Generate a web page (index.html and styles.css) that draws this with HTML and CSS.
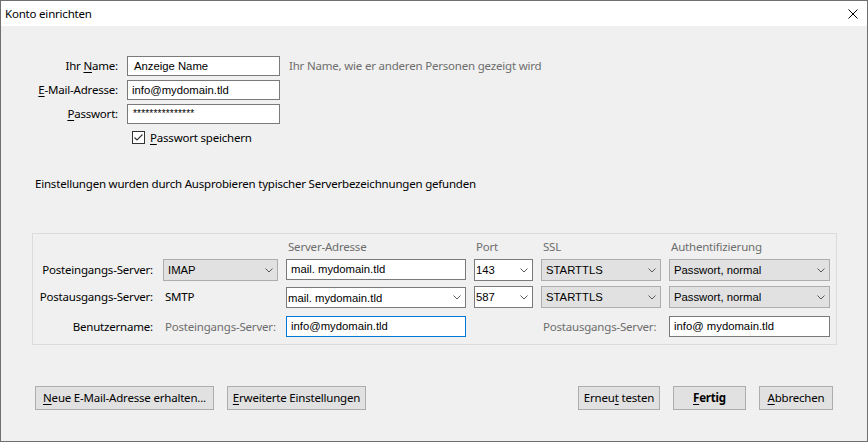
FILE: index.html
```html
<!DOCTYPE html>
<html lang="de">
<head>
<meta charset="utf-8">
<title>Konto einrichten</title>
<link rel="stylesheet" href="styles.css">
</head>
<body>
<div class="window">
  <div class="titlebar">
    <span class="title">Konto einrichten</span>
    <svg class="close" viewBox="0 0 10 10" width="10" height="10"><path d="M0.5 0.5 L9.5 9.5 M9.5 0.5 L0.5 9.5" stroke="#000" stroke-width="1" fill="none"/></svg>
  </div>
  <div class="content">
    <div class="identity">
      <span class="label">Ihr <u>N</u>ame:</span>
      <div class="field pad6">Anzeige Name</div>
      <span class="hint">Ihr Name, wie er anderen Personen gezeigt wird</span>

      <span class="label"><u>E</u>-Mail-Adresse:</span>
      <div class="field">info@mydomain.tld</div>
      <span></span>

      <span class="label"><u>P</u>asswort:</span>
      <div class="field pw">***************</div>
      <span></span>

      <span></span>
      <label class="check"><span class="box"><svg viewBox="0 0 11 11" width="11" height="11"><path d="M1.5 5.5 L4 8 L9.5 2.5" stroke="#333" stroke-width="1.1" fill="none"/></svg></span><span><u>P</u>asswort speichern</span></label>
      <span></span>
    </div>

    <p class="status">Einstellungen wurden durch Ausprobieren typischer Serverbezeichnungen gefunden</p>

    <div class="servers">
      <span></span><span></span>
      <span class="head">Server-Adresse</span>
      <span class="head">Port</span>
      <span class="head">SSL</span>
      <span class="head">Authentifizierung</span>

      <span class="rlabel">Posteingangs-Server:</span>
      <div class="select gray"><span>IMAP</span><svg class="chev" viewBox="0 0 8 5" width="8" height="5"><path d="M0.5 0.5 L4 4 L7.5 0.5" stroke="#5a5a5a" fill="none"/></svg></div>
      <div class="field f21">mail. mydomain.tld</div>
      <div class="select white"><span>143</span><svg class="chev" viewBox="0 0 8 5" width="8" height="5"><path d="M0.5 0.5 L4 4 L7.5 0.5" stroke="#5a5a5a" fill="none"/></svg></div>
      <div class="select gray"><span>STARTTLS</span><svg class="chev" viewBox="0 0 8 5" width="8" height="5"><path d="M0.5 0.5 L4 4 L7.5 0.5" stroke="#5a5a5a" fill="none"/></svg></div>
      <div class="select gray"><span>Passwort, normal</span><svg class="chev" viewBox="0 0 8 5" width="8" height="5"><path d="M0.5 0.5 L4 4 L7.5 0.5" stroke="#5a5a5a" fill="none"/></svg></div>

      <span class="rlabel">Postausgangs-Server:</span>
      <span class="plain">SMTP</span>
      <div class="select white combo"><span>mail. mydomain.tld</span><svg class="chev" viewBox="0 0 8 5" width="8" height="5"><path d="M0.5 0.5 L4 4 L7.5 0.5" stroke="#5a5a5a" fill="none"/></svg></div>
      <div class="select white"><span>587</span><svg class="chev" viewBox="0 0 8 5" width="8" height="5"><path d="M0.5 0.5 L4 4 L7.5 0.5" stroke="#5a5a5a" fill="none"/></svg></div>
      <div class="select gray"><span>STARTTLS</span><svg class="chev" viewBox="0 0 8 5" width="8" height="5"><path d="M0.5 0.5 L4 4 L7.5 0.5" stroke="#5a5a5a" fill="none"/></svg></div>
      <div class="select gray"><span>Passwort, normal</span><svg class="chev" viewBox="0 0 8 5" width="8" height="5"><path d="M0.5 0.5 L4 4 L7.5 0.5" stroke="#5a5a5a" fill="none"/></svg></div>

      <span class="rlabel">Benutzername:</span>
      <span class="plain muted">Posteingangs-Server:</span>
      <div class="field f21 focus">info@mydomain.tld</div>
      <span></span>
      <span class="plain muted">Postausgangs-Server:</span>
      <div class="field f21">info@ mydomain.tld</div>
    </div>

    <div class="actions">
      <div class="group">
        <button class="btn w179"><u>N</u>eue E-Mail-Adresse erhalten...</button>
        <button class="btn w139"><u>E</u>rweiterte Einstellungen</button>
      </div>
      <div class="group">
        <button class="btn w82">Erneu<u>t</u> testen</button>
        <button class="btn w73 bold"><u>F</u>ertig</button>
        <button class="btn w74"><u>A</u>bbrechen</button>
      </div>
    </div>
  </div>
</div>
</body>
</html>
```

FILE: styles.css
```css
* { box-sizing: border-box; margin: 0; padding: 0; }
html, body { width: 868px; height: 442px; overflow: hidden; }
body {
  font-family: "Noto Sans", "DejaVu Sans", sans-serif;
  font-size: 11.5px;
  letter-spacing: -0.2px;
  color: #000;
  background: #f0f0f0;
}
u { text-decoration: underline; text-underline-offset: 2px; }

.window {
  width: 868px;
  height: 442px;
  border: 1px solid #6f6f6f;
  display: flex;
  flex-direction: column;
  background: #f0f0f0;
}
.titlebar {
  height: 25px;
  flex: none;
  background: #fff;
  display: flex;
  align-items: center;
  justify-content: space-between;
  padding-left: 4px;
  padding-right: 9px;
}
.title { line-height: 16px; }
.close { display: block; }

.content { flex: 1; display: flex; flex-direction: column; }

.identity {
  display: grid;
  grid-template-columns: 117px 153px auto;
  grid-template-rows: 20px 20px 20px 19px;
  column-gap: 9px;
  row-gap: 4px;
  margin-top: 30px;
  align-items: center;
}
.label { text-align: right; line-height: 16px; white-space: nowrap; }
.hint { color: #6d6d6d; line-height: 16px; white-space: nowrap; }

.field {
  height: 20px;
  background: #fff;
  border: 1px solid #7a7a7a;
  font-family: "Liberation Sans", Arial, sans-serif;
  font-size: 11.3px;
  letter-spacing: 0;
  line-height: 18px;
  padding-left: 4px;
  white-space: nowrap;
  overflow: hidden;
}
.pad6 { padding-left: 6px; }
.pw { padding-left: 5px; font-size: 10px; letter-spacing: 0.2px; }
.f21 { height: 21px; line-height: 19px; }
.focus { border-color: #0078d7; }

.check { display: flex; align-items: center; gap: 5px; margin-left: 5px; line-height: 16px; white-space: nowrap; }
.box {
  width: 13px; height: 13px;
  border: 1px solid #333;
  background: #fff;
  display: flex; align-items: center; justify-content: center;
}
.box svg { display: block; }

.status { margin-top: 29px; margin-left: 34px; line-height: 16px; white-space: nowrap; }

.servers {
  margin-top: 41px;
  margin-left: 31px;
  width: 805px;
  border: 1px solid #dcdcdc;
  padding: 5px 5px 7px 0;
  display: grid;
  grid-template-columns: 122px 115px 180px 59px 120px 161px;
  grid-template-rows: 20px 27px 30px 21px;
  column-gap: 8px;
  align-items: start;
}
.head { color: #6d6d6d; padding-left: 2px; line-height: 16px; white-space: nowrap; }
.rlabel { text-align: right; padding-right: 2px; line-height: 22px; white-space: nowrap; }
.plain { padding-left: 2px; line-height: 22px; white-space: nowrap; }
.muted { color: #6d6d6d; line-height: 21px; }

.select {
  height: 22px;
  display: flex;
  align-items: center;
  justify-content: space-between;
  font-family: "Liberation Sans", Arial, sans-serif;
  font-size: 11.3px;
  letter-spacing: 0;
  padding-left: 4px;
  padding-right: 4px;
  white-space: nowrap;
}
.select.gray { background: #e1e1e1; border: 1px solid #adadad; }
.select.white { background: #fff; border: 1px solid #7a7a7a; padding-left: 1px; }
.select.combo { height: 21px; margin-top: 1px; }
.chev { display: block; flex: none; }

.actions {
  margin-top: 41px;
  display: flex;
  justify-content: space-between;
  padding: 0 34px;
}
.group { display: flex; gap: 13px; }
.btn {
  height: 24px;
  background: #e1e1e1;
  border: 1px solid #adadad;
  font-family: inherit;
  font-size: 11.5px;
  letter-spacing: -0.2px;
  color: #000;
  line-height: 20px;
  text-align: center;
  white-space: nowrap;
}
.bold { font-weight: bold; }
.w179 { width: 179px; }
.w139 { width: 139px; }
.w82 { width: 82px; }
.w73 { width: 73px; }
.w74 { width: 74px; }
```
